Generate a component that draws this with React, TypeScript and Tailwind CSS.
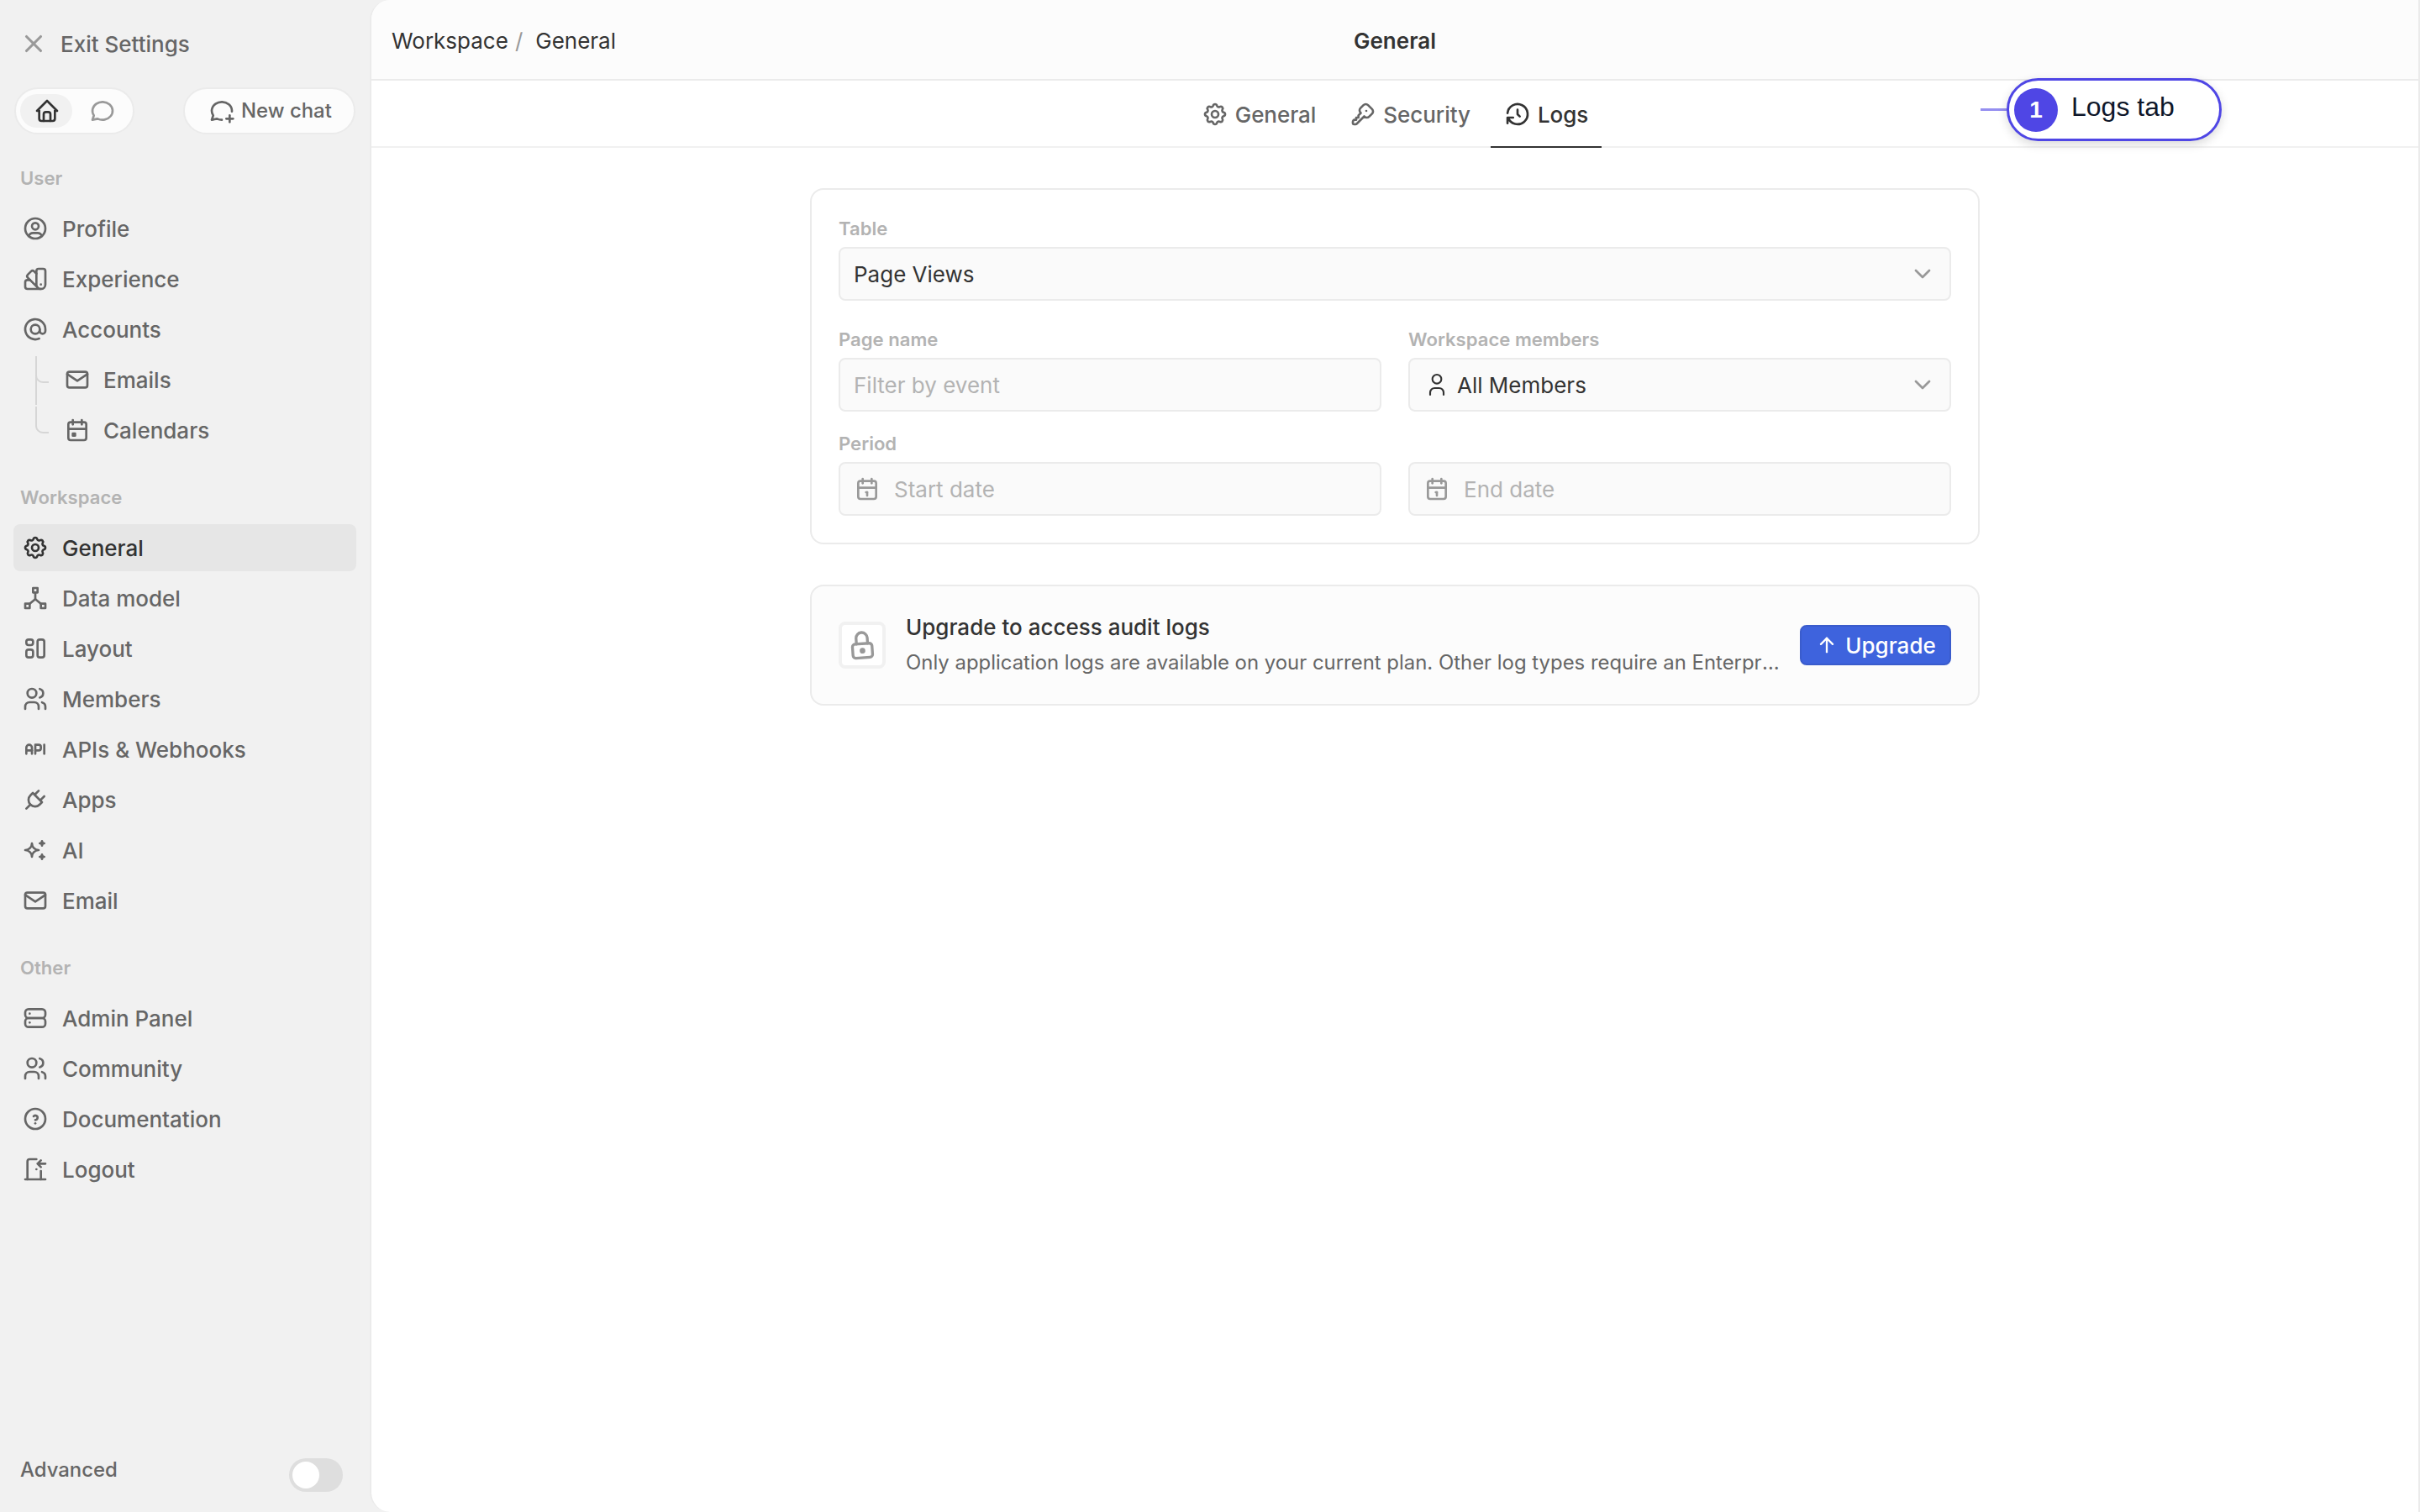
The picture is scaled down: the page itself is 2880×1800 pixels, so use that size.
import { useState } from 'react';
import type { ReactNode } from 'react';
import type { IconType } from 'react-icons';
import {
  TbApi, TbArrowUp, TbAt, TbCalendar, TbCalendarEvent, TbChevronDown, TbColorSwatch, TbDoorEnter,
  TbHelpCircle, TbHierarchy2, TbHistory, TbHome, TbKey, TbLayout, TbLock, TbMail, TbMessageCircle,
  TbMessageCirclePlus, TbPlug, TbServer, TbSettings, TbSparkles, TbUser, TbUserCircle, TbUsers, TbX,
} from 'react-icons/tb';

interface NavItem {
  label: string;
  icon: IconType;
  sub?: 'middle' | 'last';
}

interface NavSection {
  title: string;
  items: NavItem[];
}

const sections: NavSection[] = [
  {
    title: 'User',
    items: [
      { label: 'Profile', icon: TbUserCircle },
      { label: 'Experience', icon: TbColorSwatch },
      { label: 'Accounts', icon: TbAt },
      { label: 'Emails', icon: TbMail, sub: 'middle' },
      { label: 'Calendars', icon: TbCalendarEvent, sub: 'last' },
    ],
  },
  {
    title: 'Workspace',
    items: [
      { label: 'General', icon: TbSettings },
      { label: 'Data model', icon: TbHierarchy2 },
      { label: 'Layout', icon: TbLayout },
      { label: 'Members', icon: TbUsers },
      { label: 'APIs & Webhooks', icon: TbApi },
      { label: 'Apps', icon: TbPlug },
      { label: 'AI', icon: TbSparkles },
      { label: 'Email', icon: TbMail },
    ],
  },
  {
    title: 'Other',
    items: [
      { label: 'Admin Panel', icon: TbServer },
      { label: 'Community', icon: TbUsers },
      { label: 'Documentation', icon: TbHelpCircle },
      { label: 'Logout', icon: TbDoorEnter },
    ],
  },
];

const tabs: { label: string; icon: IconType }[] = [
  { label: 'General', icon: TbSettings },
  { label: 'Security', icon: TbKey },
  { label: 'Logs', icon: TbHistory },
];

function Branch({ last }: { last: boolean }) {
  return (
    <svg width="16" height="60" viewBox="0 0 16 60" fill="none" stroke="#d6d6d6" strokeWidth="2" className="shrink-0 self-start">
      {!last && <path d="M1 0V58" />}
      <path d="M1 0V23a8 8 0 0 0 8 8H16" />
    </svg>
  );
}

function NavRow({ item, active, onClick }: { item: NavItem; active: boolean; onClick: () => void }) {
  const Icon = item.icon;
  return (
    <div className="flex h-14">
      {item.sub && <div className="flex w-[50px] pl-[26px]"><Branch last={item.sub === 'last'} /></div>}
      <button onClick={onClick}
        className={`flex flex-1 items-center rounded-lg pl-[10px] text-[26px] font-medium ${item.sub ? 'gap-[15px]' : 'gap-4'} ${active ? 'bg-[#e6e6e6] text-[#333]' : 'text-[#666]'}`}>
        <Icon size={32} strokeWidth={2} /> {item.label}
      </button>
    </div>
  );
}

function Sidebar() {
  const [active, setActive] = useState('General');
  return (
    <aside className="flex w-[440px] shrink-0 flex-col pl-4 pr-4">
      <div className="flex h-[104px] items-center gap-[15px] pl-[7px] text-[26px] font-medium text-[#666]">
        <TbX size={34} strokeWidth={2.2} className="text-[#999]" /> Exit Settings
      </div>
      <div className="flex items-center justify-between px-px">
        <div className="flex h-14 w-[143px] items-center gap-[5px] rounded-full border-2 border-[#ebebeb] bg-[#fcfcfc] pl-[5px]">
          <button className="flex h-10 w-[62px] items-center justify-center rounded-full bg-[#f1f1f1] pl-0.5 text-[#333]">
            <TbHome size={32} strokeWidth={2} />
          </button>
          <button className="flex h-10 w-[62px] items-center justify-center text-[#999]">
            <TbMessageCircle size={32} strokeWidth={2} />
          </button>
        </div>
        <button className="flex h-14 w-[205px] items-center gap-[7px] rounded-full border-2 border-[#ebebeb] bg-[#fcfcfc] pl-[28px] text-[23.92px] font-medium whitespace-nowrap text-[#666]">
          <TbMessageCirclePlus size={32} strokeWidth={2} className="shrink-0" /> New chat
        </button>
      </div>
      {sections.map(s => (
        <nav key={s.title} className="mt-8 flex flex-col">
          <h3 className="mb-3 flex h-10 items-center pl-2 pt-0.5 text-[22.1px] font-semibold text-[#b3b3b3]">{s.title}</h3>
          <div className="flex flex-col gap-1">
            {s.items.map(item => (
              <NavRow key={item.label} item={item} active={item.label === active} onClick={() => setActive(item.label)} />
            ))}
          </div>
        </nav>
      ))}
      <div className="mb-6 mt-auto flex h-10 justify-between pl-2 pr-4">
        <span className="text-[23.92px] leading-[28px] font-medium text-[#666]">Advanced</span>
        <button className="flex h-10 w-16 items-center rounded-full bg-[#dedede] p-1">
          <span className="size-8 rounded-full bg-white" />
        </button>
      </div>
    </aside>
  );
}

function Field({ label, children }: { label: string; children: ReactNode }) {
  return (
    <div className="flex flex-1 flex-col gap-2">
      <label className="h-7 text-[22.1px] leading-[28px] font-semibold text-[#b3b3b3]">{label}</label>
      <div className="flex h-16 items-center rounded-lg border-2 border-[#ebebeb] bg-[#fafafa] px-4 text-[26px] text-[#333]">
        {children}
      </div>
    </div>
  );
}

function Chevron() {
  return <TbChevronDown size={32} strokeWidth={2} className="ml-auto text-[#999]" />;
}

function DatePlaceholder({ text }: { text: string }) {
  return (
    <>
      <TbCalendar size={32} strokeWidth={2} className="mr-4 text-[#999]" />
      <span className="text-[#b3b3b3]">{text}</span>
    </>
  );
}

function Filters() {
  return (
    <section className="flex flex-col rounded-2xl border-2 border-[#ebebeb] p-8">
      <Field label="Table">Page Views <Chevron /></Field>
      <div className="mt-8 flex gap-8">
        <Field label="Page name"><span className="text-[#b3b3b3]">Filter by event</span></Field>
        <Field label="Workspace members">
          <TbUser size={32} strokeWidth={1.6} className="mr-2" /> All Members <Chevron />
        </Field>
      </div>
      <div className="mt-6 flex gap-8">
        <Field label="Period"><DatePlaceholder text="Start date" /></Field>
        <Field label=""><DatePlaceholder text="End date" /></Field>
      </div>
    </section>
  );
}

function UpgradeCard() {
  return (
    <section className="mt-12 flex h-36 items-center gap-6 rounded-2xl border-2 border-[#ebebeb] bg-[#fcfcfc] px-8">
      <div className="flex size-14 shrink-0 items-center justify-center rounded-lg border-4 border-[#f1f1f1] bg-white">
        <TbLock size={40} strokeWidth={2} className="-rotate-4 text-[#999]" />
      </div>
      <div className="flex min-w-0 flex-1 flex-col gap-1">
        <h2 className="text-[26px] leading-[38px] font-medium text-[#333]">Upgrade to access audit logs</h2>
        <p className="truncate text-[23.92px] leading-[38px] text-[#666]">
          Only application logs are available on your current plan. Other log types require an Enterprise plan.
        </p>
      </div>
      <button className="flex h-12 w-[180px] shrink-0 items-center justify-center gap-2 rounded-lg border-2 border-[#3a5ccc] bg-[#3e63dd] text-[26px] font-medium text-white">
        <TbArrowUp size={28} strokeWidth={2} /> Upgrade
      </button>
    </section>
  );
}

// numbered marker pointing at the logs tab
function Callout() {
  return (
    <div className="absolute left-[2357px] top-[93px] flex items-center">
      <div className="h-[3px] w-[31px] bg-[#958ff0]" />
      <div className="flex h-[75px] w-64 items-center rounded-full border-3 border-[#4f46e5] bg-white pl-1.5 font-['Liberation_Sans',sans-serif] shadow-[0_4px_12px_rgba(0,0,0,0.15)]">
        <span className="flex size-[52px] items-center justify-center rounded-full bg-[#4f46e5] text-[28px] font-bold text-white">1</span>
        <span className="ml-4 pb-2 text-[32px] text-[#0f172a]">Logs tab</span>
      </div>
    </div>
  );
}

export default function App() {
  const [tab, setTab] = useState('Logs');
  return (
    <div className="relative flex h-[1800px] w-[2880px] overflow-hidden bg-[#f1f1f1] font-['Inter',sans-serif]">
      <Sidebar />
      <main className="flex flex-1 flex-col overflow-hidden rounded-l-3xl border-x-2 border-[#ebebeb] bg-white">
        <header className="grid h-24 grid-cols-3 items-center border-b-2 border-[#ebebeb] bg-[#fcfcfc] px-6 pt-0.5 text-[26px] text-[#333]">
          <div className="flex">
            <span>Workspace</span>
            <span className="ml-2 mr-[15px] text-[#999]">/</span>
            <span>General</span>
          </div>
          <h1 className="text-center font-semibold">General</h1>
        </header>
        <div className="flex h-20 shrink-0 justify-center gap-2 border-b-2 border-[#f1f1f1]">
          {tabs.map(({ label, icon: Icon }) => (
            <button key={label} onClick={() => setTab(label)}
              className={`-mb-0.5 flex items-center gap-2 border-b-2 px-4 pt-0.5 text-[26px] font-medium tracking-[-0.05px] ${tab === label ? 'border-[#333] text-[#333]' : 'border-transparent text-[#666]'}`}>
              <Icon size={32} strokeWidth={2} /> {label}
            </button>
          ))}
        </div>
        <div className="mx-auto mt-12 flex w-[1392px] flex-col">
          <Filters />
          <UpgradeCard />
        </div>
      </main>
      <Callout />
    </div>
  );
}
